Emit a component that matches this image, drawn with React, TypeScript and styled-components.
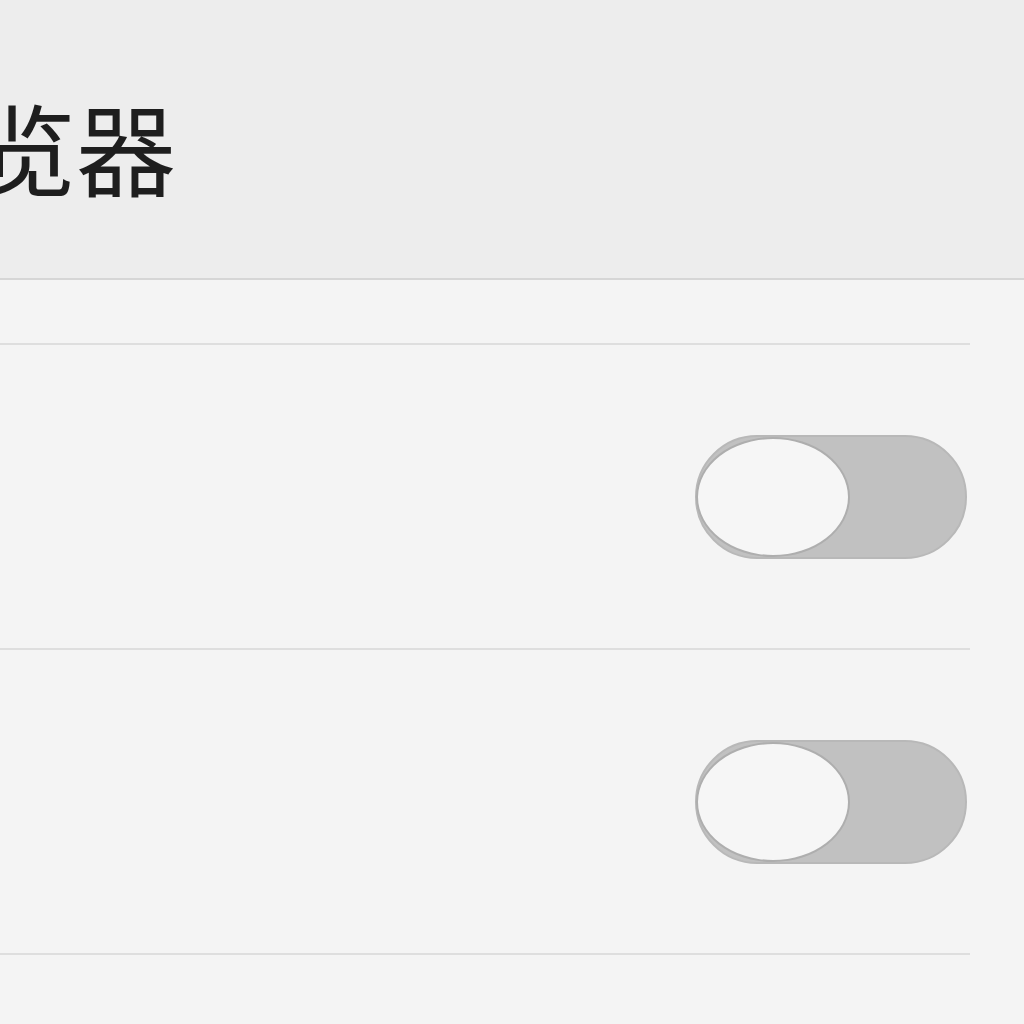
import styled, { createGlobalStyle } from "styled-components";

const GlobalStyle = createGlobalStyle`
  html, body {
    margin: 0;
    padding: 0;
    background: #f4f4f4;
    overflow: hidden;
  }
  body {
    font-family: "Noto Sans CJK SC", "Noto Sans", sans-serif;
  }
`;

const Page = styled.div`
  width: 1024px;
  height: 1024px;
  display: flex;
  flex-direction: column;
  background: #f4f4f4;
  overflow: hidden;
`;

const Header = styled.div`
  height: 278px;
  flex-shrink: 0;
  display: flex;
  align-items: flex-start;
  background: #ededed;
  border-bottom: 2px solid #d6d6d6;
`;

const Title = styled.h1`
  margin: 96px 0 0 -124px;
  font-size: 100px;
  line-height: 1;
  font-weight: 400;
  color: #1e1e1e;
  white-space: nowrap;
`;

const List = styled.div`
  display: flex;
  flex-direction: column;
  padding-top: 63px;
  padding-right: 54px;
`;

const Divider = styled.div`
  height: 2px;
  background: #dedede;
`;

const Row = styled.div`
  height: 303px;
  display: flex;
  align-items: center;
  justify-content: flex-end;
  padding-right: 3px;
`;

const Track = styled.div<{ $on?: boolean }>`
  width: 268px;
  height: 120px;
  border-radius: 62px;
  border: 2px solid #b8b8b8;
  background: ${(p) => (p.$on ? "#4cd964" : "#c1c1c1")};
  display: flex;
  align-items: center;
  justify-content: ${(p) => (p.$on ? "flex-end" : "flex-start")};
`;

const Knob = styled.div`
  width: 150px;
  height: 116px;
  border-radius: 50%;
  background: #f6f6f6;
  border: 2px solid #aeaeae;
  margin-left: -1px;
`;

const Toggle = ({ on }: { on?: boolean }) => (
  <Track $on={on}>
    <Knob />
  </Track>
);

export default function App() {
  return (
    <Page>
      <GlobalStyle />
      <Header>
        <Title>浏览器</Title>
      </Header>
      <List>
        <Divider />
        <Row>
          <Toggle />
        </Row>
        <Divider />
        <Row>
          <Toggle />
        </Row>
        <Divider />
      </List>
    </Page>
  );
}
